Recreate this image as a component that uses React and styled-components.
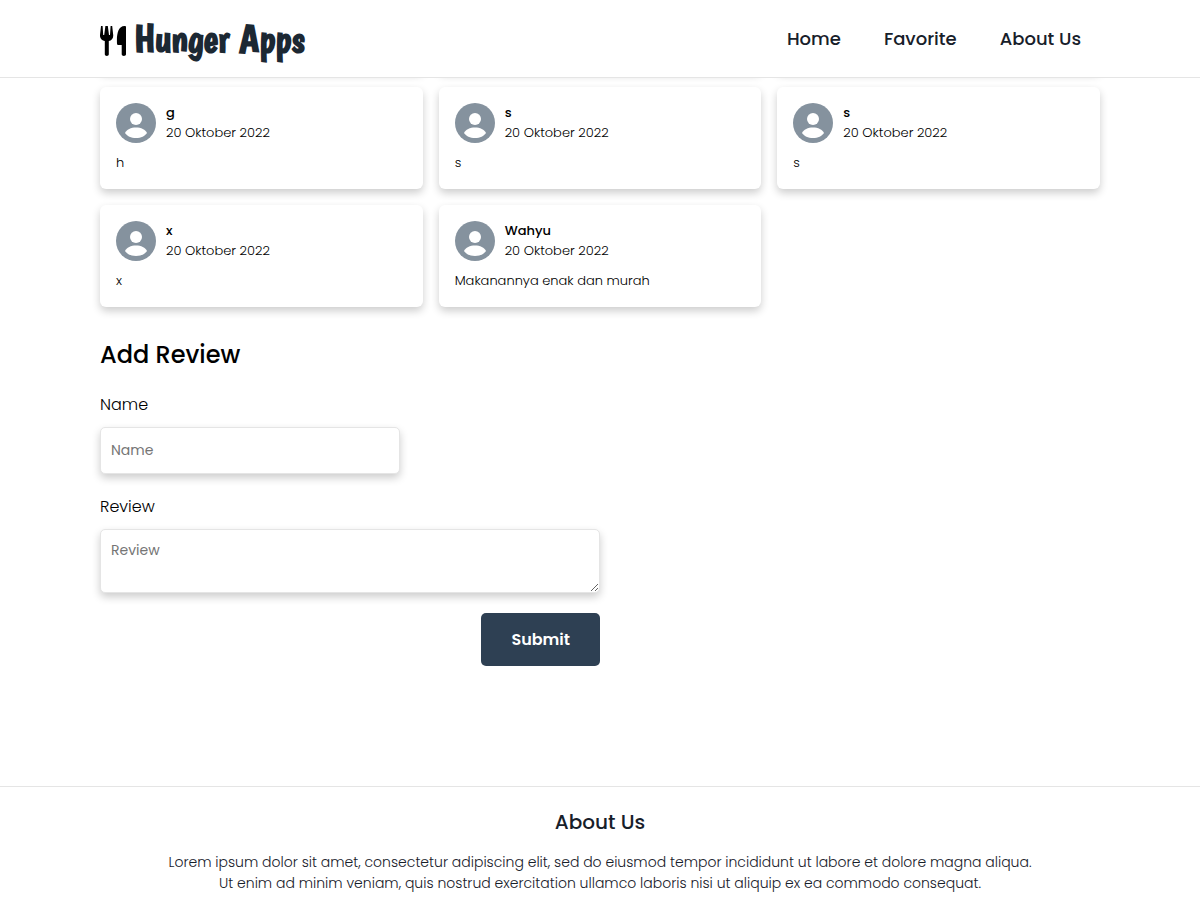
import React from 'react';
import styled, { createGlobalStyle } from 'styled-components';

const Global = createGlobalStyle`
  *, *::before, *::after { box-sizing: border-box; }
  body {
    margin: 0;
    background: #fff;
    color: #000;
    font-family: Poppins, Inter, "Liberation Sans", sans-serif;
    font-weight: 300;
  }
  h1, h2, p { margin: 0; }
`;

const Header = styled.header`
  position: sticky;
  top: 0;
  z-index: 1;
  background: #fff;
  border-bottom: 1px solid #e5e5e5;
`;

const Container = styled.div`
  max-width: 1040px;
  margin: 0 auto;
  padding: 0 20px;
`;

const Bar = styled(Container)`
  display: flex;
  align-items: center;
  justify-content: space-between;
  height: 77px;
`;

const Brand = styled.a`
  display: flex;
  align-items: center;
  gap: 6px;
  color: #1c2833;
  font: 700 39px/48px Boogaloo, "Liberation Sans Narrow", sans-serif;
  text-decoration: none;

  svg {
    margin-top: 4px;
    fill: #000;
  }
`;

const Nav = styled.nav`
  display: flex;
  gap: 43px;
  padding-right: 19px;
`;

const NavLink = styled.a`
  color: #17202a;
  font-size: 18px;
  font-weight: 500;
  line-height: 27px;
  text-decoration: none;
`;

const Grid = styled.section`
  display: grid;
  grid-template-columns: repeat(3, 1fr);
  gap: 16px;
  margin-top: -17px;
`;

const Surface = styled.div`
  min-height: 10px;
  border-radius: 6px;
  background: #fff;
  box-shadow: 0 4px 8px rgba(0, 0, 0, 0.2);
`;

const Card = styled(Surface).attrs({ as: 'article' })`
  padding: 16px;
  font-size: 13px;
  line-height: 20px;
`;

const Person = styled.div`
  display: flex;
  gap: 10px;
  margin-bottom: 10px;
`;

const Author = styled.p`
  font-weight: 500;
`;

const Title = styled.h1`
  margin: 30px 0 19px;
  font-size: 24px;
  font-weight: 500;
  line-height: 36px;
`;

const Form = styled.form`
  display: flex;
  flex-direction: column;
  max-width: 500px;
`;

const Label = styled.label`
  margin-bottom: 10px;
  font-size: 16px;
  line-height: 25px;
`;

const Field = styled.input`
  width: ${(p) => p.$width};
  height: ${(p) => p.$height};
  margin: 0 0 20px;
  padding: 10px;
  border: 1px solid #e5e5e5;
  border-radius: 5px;
  background: #fff;
  box-shadow: 0 4px 8px rgba(0, 0, 0, 0.2);
  font: inherit;
  font-size: 14px;
  font-weight: 400;
  line-height: 21px;
  outline: none;

  &::placeholder { color: #757575; }
`;

const Submit = styled.button`
  align-self: flex-end;
  height: 53px;
  padding: 0 30px;
  border: 0;
  border-radius: 5px;
  background: #2e4053;
  color: #fff;
  font: inherit;
  font-size: 16px;
  font-weight: 600;
  cursor: pointer;
`;

const Footer = styled.footer`
  margin-top: 120px;
  padding: 20px;
  border-top: 1px solid #e5e5e5;
  color: #17202a;
  text-align: center;
`;

const FooterTitle = styled.h2`
  margin-bottom: 15px;
  font-size: 20px;
  font-weight: 500;
  line-height: 30px;
`;

const FooterText = styled.p`
  max-width: 880px;
  margin: 0 auto;
  font-size: 14px;
  line-height: 21px;
`;

const Utensils = () => (
  <svg width="28" height="30" viewBox="0 0 28 30" aria-hidden="true">
    <path d="M1 0h1.600l.6 9h1L5.400 0h2.400l1.200 9h1l.6-9h1.600l1 9c.3 3.500-1.700 5.400-4.400 6v13.200c0 2.300-4 2.300-4 0V15C2 14.400-.3 12.500 0 9z" />
    <path d="M26 1v27.200c0 2.300-4.300 2.300-4.300 0v-9.200h-3c-1 0-1.700-.5-1.700-1.500C16.500 8.500 18 0 24.500 0 25.500 0 26 .3 26 1z" />
  </svg>
);

const Avatar = () => (
  <svg width="40" height="40" viewBox="0 0 40 40" aria-hidden="true">
    <circle cx="20" cy="20" r="20" fill="#85929e" />
    <circle cx="20" cy="16" r="6" fill="#fff" />
    <path fill="#fff" d="M9 30c1.500-3.500 6-5.500 11-5.500S29.500 26.500 31 30c-2 3-6 5-11 5s-9-2-11-5z" />
  </svg>
);

const reviews = [
  { name: 'g', text: 'h' },
  { name: 's', text: 's' },
  { name: 's', text: 's' },
  { name: 'x', text: 'x' },
  { name: 'Wahyu', text: 'Makanannya enak dan murah' },
];

export default function App() {
  return (
    <>
      <Global />
      <Header>
        <Bar>
          <Brand href="#home"><Utensils />Hunger Apps</Brand>
          <Nav>
            <NavLink href="#home">Home</NavLink>
            <NavLink href="#favorite">Favorite</NavLink>
            <NavLink href="#about">About Us</NavLink>
          </Nav>
        </Bar>
      </Header>
      <Container as="main">
        <Grid>
          {/* End of the previous row, tucked under the sticky header */}
          <Surface aria-hidden="true" />
          <Surface aria-hidden="true" />
          <Surface aria-hidden="true" />
          {reviews.map((r, i) => (
            <Card key={i}>
              <Person>
                <Avatar />
                <div>
                  <Author>{r.name}</Author>
                  <p>20 Oktober 2022</p>
                </div>
              </Person>
              <p>{r.text}</p>
            </Card>
          ))}
        </Grid>
        <Title>Add Review</Title>
        <Form onSubmit={(e) => e.preventDefault()}>
          <Label htmlFor="name">Name</Label>
          <Field id="name" placeholder="Name" $width="60%" $height="47px" />
          <Label htmlFor="review">Review</Label>
          <Field as="textarea" id="review" placeholder="Review" $width="100%" $height="64px" />
          <Submit type="submit">Submit</Submit>
        </Form>
      </Container>
      <Footer id="about">
        <FooterTitle>About Us</FooterTitle>
        <FooterText>
          Lorem ipsum dolor sit amet, consectetur adipiscing elit, sed do eiusmod tempor incididunt ut labore et
          dolore magna aliqua. Ut enim ad minim veniam, quis nostrud exercitation ullamco laboris nisi ut aliquip ex
          ea commodo consequat.
        </FooterText>
      </Footer>
    </>
  );
}
